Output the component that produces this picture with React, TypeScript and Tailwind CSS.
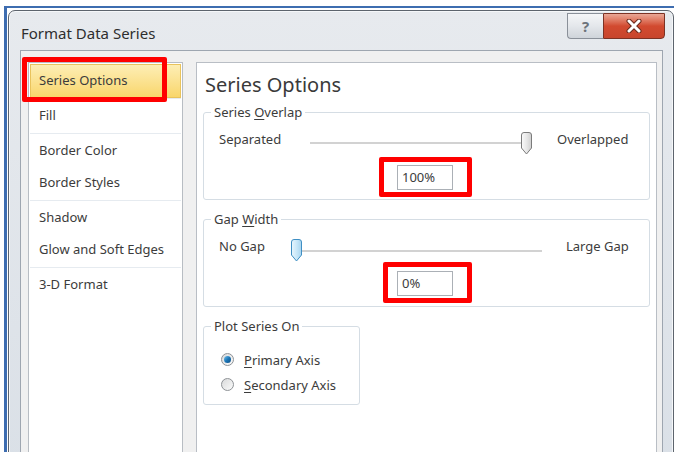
import type { ReactNode } from "react";

const listGroups: string[][] = [
  ["Fill"],
  ["Border Color", "Border Styles"],
  ["Shadow", "Glow and Soft Edges"],
  ["3-D Format"],
];

function Thumb({ blue }: { blue?: boolean }) {
  const id = blue ? "thumbBlue" : "thumbGray";
  return (
    <svg width="13" height="23" viewBox="0 0 13 23">
      <defs>
        <linearGradient id={id} x1="0" y1="0" x2="1" y2="0">
          <stop offset="0" stopColor={blue ? "#e9f6fd" : "#fbfbfb"} />
          <stop offset="0.55" stopColor={blue ? "#c6e6f8" : "#e6e6e6"} />
          <stop offset="1" stopColor={blue ? "#a7d4ef" : "#cfcfcf"} />
        </linearGradient>
      </defs>
      <path
        d="M1.5 3 Q1.5 0.5 4 0.5 H9 Q11.5 0.5 11.5 3 V16 L6.5 22 L1.5 16 Z"
        fill={`url(#${id})`}
        stroke={blue ? "#3f8fc4" : "#7b7b7b"}
        strokeWidth="1"
      />
    </svg>
  );
}

function GroupBox({
  legend,
  className,
  children,
}: {
  legend: ReactNode;
  className?: string;
  children: ReactNode;
}) {
  return (
    <fieldset className={`rounded-[3px] border border-[#d5dde4] p-0 ${className ?? ""}`}>
      <legend className="ml-[7px] px-[3px] text-[13px] leading-[18px] text-[#3c3c3c]">{legend}</legend>
      {children}
    </fieldset>
  );
}

function Radio({ checked, children }: { checked?: boolean; children: ReactNode }) {
  return (
    <div className="flex h-[25px] items-center gap-[10px] pl-[17px]">
      <span className="flex size-[13px] items-center justify-center rounded-full border border-[#8e9296] bg-gradient-to-br from-[#d9dadb] to-[#fbfbfb]">
        {checked && (
          <span className="size-[7px] rounded-full bg-gradient-to-br from-[#6bc0ee] via-[#1b76b6] to-[#0f4f86]" />
        )}
      </span>
      <span className="text-[13px] leading-[18px]">{children}</span>
    </div>
  );
}

function ValueBox({ value }: { value: string }) {
  return (
    <div className="h-[25px] w-[56px] border border-[#abb0b6] bg-white pl-[4px] text-[13px] leading-[23px]">
      {value}
    </div>
  );
}

export default function App() {
  return (
    <div className="relative h-[452px] w-[675px] overflow-hidden bg-white font-['Noto_Sans',sans-serif] text-[#3c3c3c]">
      {/* desktop edge behind the dialog */}
      <div className="ml-[4px] mt-[6px] h-[460px] w-[670px] border-l-[3px] border-t-2 border-[#3e6db0] pl-px pt-[2px]">
        {/* dialog window */}
        <div className="h-[460px] w-[666px] rounded-t-[7px] border border-[#5d646d] bg-gradient-to-b from-[#e7eaee] to-[#dae0e7] shadow-[inset_0_0_0_1px_#f5f7f9]">
          {/* caption */}
          <div className="flex h-[39px] justify-between">
            <div className="pl-[12px] pt-[12px] text-[15px] leading-[20px] text-[#2e2e2e]">Format Data Series</div>
            <div className="mr-[8px] mt-[2px] flex h-[26px]">
              <div className="flex w-[36px] items-center justify-center rounded-bl-[4px] border border-r-0 border-[#8a9099] bg-gradient-to-b from-[#f5f6f8] via-[#e4e7eb] to-[#cfd4da] text-[15px] font-bold text-[#6d737b]">
                ?
              </div>
              <div className="flex w-[62px] items-center justify-center rounded-br-[4px] border border-[#7c3224] bg-gradient-to-b from-[#e9a796] via-[#d24a30] to-[#c8452c]">
                <svg width="16" height="14" viewBox="0 0 16 14">
                  <path d="M3 2 L13 12 M13 2 L3 12" stroke="#6b2a1c" strokeWidth="5" strokeLinecap="round" />
                  <path d="M3 2 L13 12 M13 2 L3 12" stroke="#ffffff" strokeWidth="3" strokeLinecap="round" />
                </svg>
              </div>
            </div>
          </div>

          {/* client area */}
          <div className="ml-[11px] mr-[10px] flex h-[420px] border border-b-0 border-[#9ea6b0] bg-[#f0f0f0] pl-[7px] pr-[5px] pt-[11px]">
            {/* category list */}
            <div className="w-[155px] shrink-0 border border-[#b8bdc3] bg-white pt-px text-[13px]">
              <div className="mx-px flex h-[34px] items-center border border-[#e9c35c] bg-gradient-to-b from-[#fdeeb4] to-[#f9d66a] pl-[8px]">
                Series Options
              </div>
              {listGroups.map((group, i) => (
                <div key={i} className="mx-px border-t border-[#e6ebf0] py-px">
                  {group.map((item) => (
                    <div key={item} className="flex h-[32px] items-center pl-[9px]">
                      {item}
                    </div>
                  ))}
                </div>
              ))}
            </div>

            {/* options page */}
            <div className="ml-[13px] flex-1 border border-[#b9bec5] bg-white pl-[6px] pr-[6px] pt-[9px]">
              <div className="pl-[2px] text-[20px] leading-[26px] text-[#3a3a3a]">Series Options</div>

              <GroupBox
                className="mt-[5px]"
                legend={
                  <>
                    Series <span className="underline underline-offset-2">O</span>verlap
                  </>
                }
              >
                <div className="flex items-start pl-[15px] pt-[9px] text-[13px] leading-[18px]">
                  <span className="w-[91px]">Separated</span>
                  <div className="relative mt-px h-[24px] w-[223px]">
                    <div className="absolute left-0 top-[11px] h-[2px] w-[217px] bg-[#d2d2d2]" />
                    <div className="absolute left-[210px] top-px">
                      <Thumb />
                    </div>
                  </div>
                  <span className="ml-[24px]">Overlapped</span>
                </div>
                <div className="pb-[9px] pl-[193px] pt-[10px]">
                  <ValueBox value="100%" />
                </div>
              </GroupBox>

              <GroupBox
                className="mt-[10px]"
                legend={
                  <>
                    Gap <span className="underline underline-offset-2">W</span>idth
                  </>
                }
              >
                <div className="flex items-start pl-[15px] pt-[9px] text-[13px] leading-[18px]">
                  <span className="w-[71px]">No Gap</span>
                  <div className="relative mt-[2px] h-[24px] w-[252px]">
                    <div className="absolute left-[6px] top-[11px] h-[2px] w-[246px] bg-[#d2d2d2]" />
                    <div className="absolute left-0 top-0">
                      <Thumb blue />
                    </div>
                  </div>
                  <span className="ml-[24px]">Large Gap</span>
                </div>
                <div className="pb-[10px] pl-[193px] pt-[8px]">
                  <ValueBox value="0%" />
                </div>
              </GroupBox>

              <GroupBox className="mt-[10px] w-[157px]" legend="Plot Series On">
                <div className="pb-[7px] pt-[12px]">
                  <Radio checked>
                    <span className="underline underline-offset-2">P</span>rimary Axis
                  </Radio>
                  <Radio>
                    <span className="underline underline-offset-2">S</span>econdary Axis
                  </Radio>
                </div>
              </GroupBox>
            </div>
          </div>
        </div>
      </div>

      {/* red callouts */}
      <div className="absolute left-[22px] top-[57px] h-[45px] w-[145px] rounded-[2px] border-[5px] border-[#ff0000]" />
      <div className="absolute left-[379px] top-[157px] h-[40px] w-[93px] rounded-[2px] border-[5px] border-[#ff0000]" />
      <div className="absolute left-[383px] top-[262px] h-[41px] w-[89px] rounded-[2px] border-[5px] border-[#ff0000]" />
    </div>
  );
}
